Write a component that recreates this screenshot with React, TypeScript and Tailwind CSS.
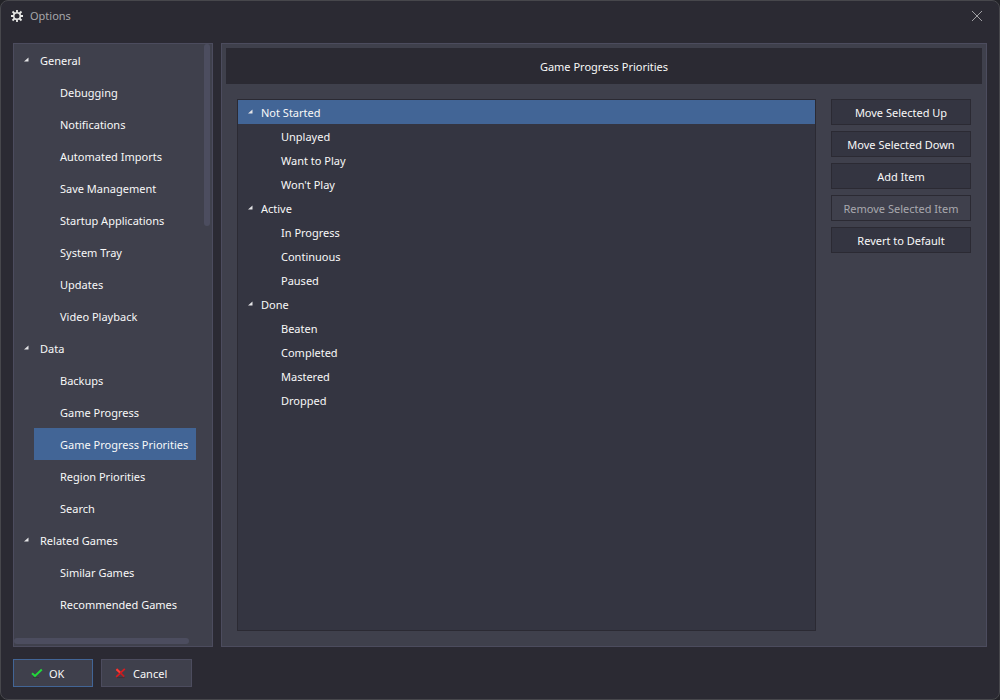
import React, { useState } from 'react';

interface TreeGroup {
  label: string;
  items: string[];
}

const sections: TreeGroup[] = [
  {
    label: 'General',
    items: [
      'Debugging',
      'Notifications',
      'Automated Imports',
      'Save Management',
      'Startup Applications',
      'System Tray',
      'Updates',
      'Video Playback',
    ],
  },
  {
    label: 'Data',
    items: ['Backups', 'Game Progress', 'Game Progress Priorities', 'Region Priorities', 'Search'],
  },
  { label: 'Related Games', items: ['Similar Games', 'Recommended Games'] },
];

const priorities: TreeGroup[] = [
  { label: 'Not Started', items: ['Unplayed', 'Want to Play', "Won't Play"] },
  { label: 'Active', items: ['In Progress', 'Continuous', 'Paused'] },
  { label: 'Done', items: ['Beaten', 'Completed', 'Mastered', 'Dropped'] },
];

const actions = [
  { label: 'Move Selected Up' },
  { label: 'Move Selected Down' },
  { label: 'Add Item' },
  { label: 'Remove Selected Item', disabled: true },
  { label: 'Revert to Default' },
];

const Expander: React.FC = () => (
  <svg className="mb-1 h-[5px] w-[5px] shrink-0" viewBox="0 0 5 5" aria-hidden="true">
    <path d="M4.5 0.5V4.5H0Z" fill="#e4e4e6" />
  </svg>
);

const GearIcon: React.FC = () => (
  <svg className="h-3 w-3" viewBox="0 0 12 12" fill="none" stroke="#e8e8e6" aria-hidden="true">
    <circle cx="6" cy="6" r="3.3" strokeWidth="1.6" />
    <path
      d="M6 0V2.4M6 9.6V12M0 6H2.4M9.6 6H12M1.5 1.5L3.5 3.5M8.5 8.5L10.5 10.5M1.5 10.5L3.5 8.5M8.5 3.5L10.5 1.5"
      strokeWidth="1.8"
    />
  </svg>
);

const CheckIcon: React.FC = () => (
  <svg className="h-3 w-3" viewBox="0 0 12 12" fill="none" aria-hidden="true">
    <path d="M2 9.5H8" stroke="#2c3f35" strokeWidth="1" />
    <path d="M1 5.2L4 8L10.8 1.6" stroke="#22d83a" strokeWidth="2" />
  </svg>
);

const CrossIcon: React.FC = () => (
  <svg className="h-3 w-3" viewBox="0 0 12 12" fill="none" aria-hidden="true">
    <path d="M2 9.6H9.5" stroke="#4a2c34" strokeWidth="1" />
    <path d="M9.8 0.8L1.2 8.8" stroke="#d81c20" strokeWidth="1.8" />
    <path d="M1.6 1L9.2 8.6" stroke="#c41c20" strokeWidth="1.8" />
    <path d="M1.4 1.2L5 4.4" stroke="#ff3c34" strokeWidth="2" />
  </svg>
);

const App: React.FC = () => {
  const [page, setPage] = useState('Game Progress Priorities');
  const [selected, setSelected] = useState('Not Started');

  return (
    <div className="h-screen bg-[#232328] font-['Noto_Sans','Open_Sans',sans-serif] text-[11px] leading-4 text-[#f8f8f8]">
      <div className="flex h-full flex-col rounded-lg border border-[#47474c] bg-[#2b2a33]">
        <header className="flex h-[30px] shrink-0 items-center gap-[7px] pl-[10px] pr-4 text-[#a6a6aa]">
          <GearIcon />
          <h1 className="flex-1">Options</h1>
          <button type="button" aria-label="Close">
            <svg className="h-3 w-3" viewBox="0 0 12 12" stroke="#a0a0a4" aria-hidden="true">
              <path d="M1 1L11 11M11 1L1 11" />
            </svg>
          </button>
        </header>

        <main className="flex min-h-0 flex-1 gap-2 px-3 pt-3">
          {/* Options pages */}
          <nav className="relative w-[200px] shrink-0 overflow-hidden border border-[#4c4c5e] bg-[#3f404c]">
            {sections.map((section) => (
              <div key={section.label}>
                <div className="flex h-8 items-center gap-[11px] pl-[10px] pt-[2px]">
                  <Expander />
                  <h2>{section.label}</h2>
                </div>
                <ul className="pl-5 pr-4">
                  {section.items.map((item) => (
                    <li key={item}>
                      <button
                        type="button"
                        onClick={() => setPage(item)}
                        className={`h-8 w-full whitespace-nowrap pl-[26px] pt-[2px] text-left ${
                          item === page ? 'bg-[#426596]' : ''
                        }`}
                      >
                        {item}
                      </button>
                    </li>
                  ))}
                </ul>
              </div>
            ))}
            <div className="absolute right-[2px] top-0 h-[182px] w-[6px] rounded-full bg-[#4c4d5f]" />
            <div className="absolute bottom-[2px] left-0 h-[6px] w-[175px] rounded-full bg-[#4c4d5f]" />
          </nav>

          {/* Current page */}
          <section className="flex min-w-0 flex-1 flex-col border border-[#4c4c5e] bg-[#3f404c] p-1">
            <h2 className="flex h-9 shrink-0 items-center justify-center bg-[#2b2a33] pt-[2px]">{page}</h2>
            <div className="flex min-h-0 flex-1 gap-[15px] px-[11px] pb-[11px] pt-[15px]">
              <div className="min-w-0 flex-1 overflow-hidden border border-[#2b2a33] bg-[#343541]">
                {priorities.map((group) => (
                  <div key={group.label}>
                    <button
                      type="button"
                      onClick={() => setSelected(group.label)}
                      className={`flex h-6 w-full items-center gap-2 pl-[10px] pt-[2px] text-left ${
                        group.label === selected ? 'bg-[#426596]' : ''
                      }`}
                    >
                      <Expander />
                      {group.label}
                    </button>
                    <ul>
                      {group.items.map((item) => (
                        <li key={item}>
                          <button
                            type="button"
                            onClick={() => setSelected(item)}
                            className={`h-6 w-full pl-[43px] pt-[2px] text-left ${
                              item === selected ? 'bg-[#426596]' : ''
                            }`}
                          >
                            {item}
                          </button>
                        </li>
                      ))}
                    </ul>
                  </div>
                ))}
              </div>

              <div className="flex w-[140px] shrink-0 flex-col gap-[6px]">
                {actions.map((action) => (
                  <button
                    key={action.label}
                    type="button"
                    disabled={action.disabled}
                    className="h-[26px] whitespace-nowrap border border-[#2b2a33] bg-[#343541] pt-[2px] disabled:bg-[#3f404c] disabled:text-[#a8a8ae]"
                  >
                    {action.label}
                  </button>
                ))}
              </div>
            </div>
          </section>
        </main>

        <footer className="flex shrink-0 gap-2 p-3">
          <button
            type="button"
            className="flex h-7 w-20 items-center gap-[6px] border border-[#426596] bg-[#3f404c] pl-[17px] pt-[2px]"
          >
            <CheckIcon />
            OK
          </button>
          <button
            type="button"
            className="flex h-7 w-[91px] items-center gap-[6px] border border-[#4c4c5e] bg-[#3f404c] pl-[13px] pt-[2px]"
          >
            <CrossIcon />
            Cancel
          </button>
        </footer>
      </div>
    </div>
  );
};

export default App;
